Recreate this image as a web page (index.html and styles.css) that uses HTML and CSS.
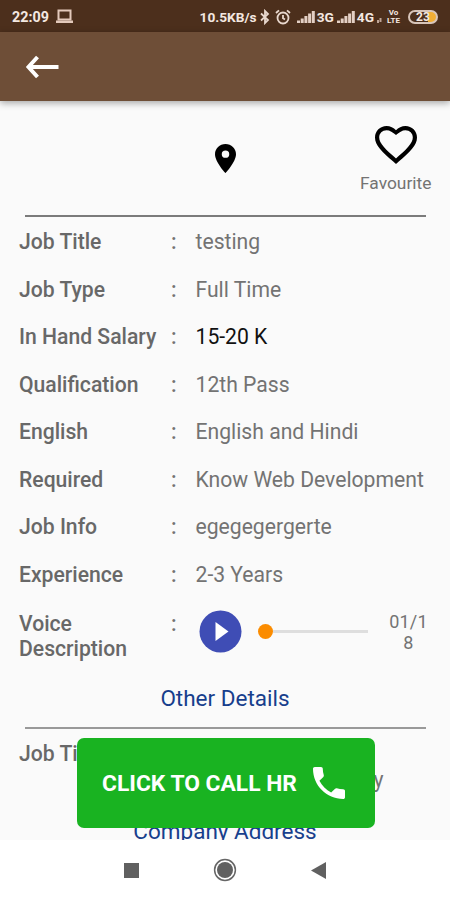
FILE: index.html
```html
<!DOCTYPE html>
<html lang="en">
<head>
    <meta charset="UTF-8">
    <meta name="viewport" content="width=device-width, initial-scale=1.0">
    <title>Job Details</title>
    <link rel="stylesheet" href="styles.css">
</head>
<body>
    <div class="screen">
        <div class="status-bar">
            <span class="clock">22:09</span>
            <svg class="laptop" width="17" height="15" viewBox="0 0 17 15">
                <rect x="2.5" y="1.5" width="12" height="9" fill="none" stroke="#e3c9bb" stroke-width="2"/>
                <rect x="0" y="11.5" width="17" height="2.5" fill="#e3c9bb"/>
            </svg>
            <span class="speed">10.5KB/s</span>
            <svg class="bluetooth" width="10" height="16" viewBox="0 0 10 16">
                <path d="M1 4.5 L8 11 L5 14 V2 L8 5 L1 11.5" fill="none" stroke="#e9d8ce" stroke-width="1.8"/>
            </svg>
            <svg class="alarm" width="16" height="16" viewBox="0 0 16 16" fill="none" stroke="#e9d8ce" stroke-width="1.8">
                <circle cx="8" cy="9" r="5.5"/>
                <path d="M8 6 V9.3 L10 10.5 M1 4 L4 1.3 M15 4 L12 1.3"/>
            </svg>
            <svg class="signal" width="18" height="14" viewBox="0 0 18 14" fill="#e3cfc4">
                <path d="M0 10.500h3v2.500H0zM3.700 8.500h3V13h-3zM7.400 6h3v7h-3zM11.100 3.500h3V13h-3zM14.800 1h3v12h-3z"/>
            </svg>
            <span class="net">3G</span>
            <svg class="signal" width="18" height="14" viewBox="0 0 18 14" fill="#e3cfc4">
                <path d="M0 10.500h3v2.500H0zM3.700 8.500h3V13h-3zM7.400 6h3v7h-3zM11.100 3.500h3V13h-3zM14.800 1h3v12h-3z"/>
            </svg>
            <span class="net">4G</span>
            <svg class="data" width="5" height="6" viewBox="0 0 5 6"><path d="M0 3h2v3H0zM2.500 1h2v4h-2z" fill="#bda496"/></svg>
            <span class="volte"><span>Vo</span><span>LTE</span></span>
            <span class="battery">23</span>
        </div>

        <header class="app-bar">
            <svg width="34" height="24" viewBox="0 0 34 24" fill="none" stroke="#fff" stroke-width="4">
                <path d="M33.500 12 H4 M12.500 2 L3.500 12 L12.500 22"/>
            </svg>
        </header>

        <main class="content">
            <div class="top">
                <svg class="pin" width="21" height="29" viewBox="5 2 14 20" preserveAspectRatio="none">
                    <path d="M12 2C8.130 2 5 5.130 5 9c0 5.250 7 13 7 13s7-7.750 7-13c0-3.870-3.130-7-7-7zm0 9.500a2.500 2.500 0 0 1 0-5 2.500 2.500 0 0 1 0 5z"/>
                </svg>
                <div class="favourite">
                    <svg width="42" height="38" viewBox="2 3 20 18.350" preserveAspectRatio="none">
                        <path d="M16.500 3c-1.740 0-3.410.810-4.500 2.090C10.910 3.810 9.240 3 7.500 3 4.420 3 2 5.420 2 8.500c0 3.780 3.400 6.860 8.550 11.540L12 21.350l1.450-1.320C18.600 15.360 22 12.280 22 8.500 22 5.420 19.580 3 16.500 3zm-4.400 15.550l-.100.100-.100-.100C7.140 14.240 4 11.390 4 8.500 4 6.500 5.500 5 7.500 5c1.540 0 3.040.990 4.500 2.360C13.460 5.990 14.960 5 16.500 5c2 0 3.500 1.500 3.500 3.500 0 2.890-3.140 5.740-7.900 10.050z"/>
                    </svg>
                    <span>Favourite</span>
                </div>
            </div>

            <div class="divider"></div>

            <div class="details">
                <div class="row"><b>Job Title</b><i>:</i><span>testing</span></div>
                <div class="row"><b>Job Type</b><i>:</i><span>Full Time</span></div>
                <div class="row"><b>In Hand Salary</b><i>:</i><span class="salary">15-20 K</span></div>
                <div class="row"><b>Qualification</b><i>:</i><span>12th Pass</span></div>
                <div class="row"><b>English</b><i>:</i><span>English and Hindi</span></div>
                <div class="row"><b>Required</b><i>:</i><span>Know Web Development</span></div>
                <div class="row"><b>Job Info</b><i>:</i><span>egegegergerte</span></div>
                <div class="row"><b>Experience</b><i>:</i><span>2-3 Years</span></div>
            </div>

            <div class="row voice">
                <b>Voice<br>Description</b><i>:</i>
                <div class="player">
                    <svg class="play" width="43" height="43" viewBox="0 0 43 43">
                        <circle cx="21.500" cy="21.500" r="21" fill="#3f4db5"/>
                        <path d="M16.500 12 V31 L29.500 21.500 Z" fill="#fff"/>
                    </svg>
                    <div class="thumb"></div>
                    <div class="track"></div>
                    <div class="time">01/1<br>8</div>
                </div>
            </div>

            <h2 class="section-title">Other Details</h2>
            <div class="divider light"></div>
            <div class="row other"><b>Job Title</b><i>:</i><span class="other-value">y</span></div>
            <h2 class="section-title company">Company Address</h2>
        </main>

        <button class="call-btn">
            <span>CLICK TO CALL HR</span>
            <svg width="32" height="32" viewBox="3 3 18 18" fill="#fff">
                <path d="M6.620 10.790c1.440 2.830 3.760 5.140 6.590 6.590l2.200-2.200c.270-.270.670-.360 1.020-.240 1.120.370 2.330.570 3.570.570.550 0 1 .450 1 1V20c0 .550-.450 1-1 1C10.610 21 3 13.390 3 4c0-.550.450-1 1-1h3.500c.550 0 1 .450 1 1 0 1.250.200 2.450.570 3.570.110.350.030.740-.250 1.020l-2.200 2.200z"/>
            </svg>
        </button>

        <nav class="nav-bar">
            <svg width="15" height="15"><rect width="15" height="15" fill="#606060"/></svg>
            <svg width="24" height="24" viewBox="0 0 24 24">
                <circle cx="12" cy="12" r="10.400" fill="none" stroke="#666" stroke-width="1.500"/>
                <circle cx="12" cy="12" r="8" fill="#606060"/>
            </svg>
            <svg width="15" height="17"><path d="M15 0 V17 L0 8.500 Z" fill="#606060"/></svg>
        </nav>
    </div>
</body>
</html>
```
FILE: styles.css
```css
* { box-sizing: border-box; }
body { margin: 0; font-family: Roboto, sans-serif; background: #fff; }
svg { display: block; flex: none; }
.screen { position: relative; display: flex; flex-direction: column; width: 450px; height: 900px; overflow: hidden; }

.status-bar { display: flex; align-items: center; flex: none; height: 32px; padding: 1px 12px 0; background: #4c2f1c; color: #f4e8e1; font-size: 13px; font-weight: 700; white-space: nowrap; }
.clock { width: 37px; font-size: 14.3px; }
.laptop { margin-left: 7px; }
.speed { margin-left: auto; font-size: 13.7px; }
.bluetooth { margin-left: 3px; }
.alarm { margin: 0 6px 0 5px; }
.signal { margin-right: 2px; }
.net { margin-right: 3px; font-size: 13.7px; }
.data { margin: 6px 4px 0 0; }
.volte { display: flex; flex-direction: column; width: 15px; font-size: 8px; line-height: 8px; text-align: center; }
.battery { width: 30px; height: 14px; margin-left: 7px; border: 2px solid #d8c5ba; border-radius: 7px; background: linear-gradient(to right, #4c2f1c 68%, #f0ad35 68%); font-size: 12px; line-height: 10px; text-align: center; }

.app-bar { display: flex; align-items: center; flex: none; height: 69px; padding: 0 0 0 25px; background: #6e4e37; box-shadow: 0 2px 7px rgba(0,0,0,0.35); z-index: 1; }

.content { height: 739px; overflow: hidden; background: #fafafa; color: #737373; font-size: 21.15px; }
.top { display: grid; grid-template-columns: 1fr 21px 1fr; height: 114px; padding-top: 25px; }
.pin { grid-column: 2; margin-top: 18px; }
.favourite { display: flex; flex-direction: column; align-items: center; gap: 9px; padding-left: 106px; font-size: 17.4px; line-height: 20px; }
.divider { height: 2px; margin: 0 24px 0 25px; background: #7b7b7b; }
.divider.light { background: #999; }

.details { padding: 1px 0; }
.row { display: grid; grid-template-columns: 152px 24.5px 1fr; height: 47.5px; padding-left: 19px; line-height: 25px; align-items: center; }
.row b { color: #686868; font-weight: 500; }
.row i { font-style: normal; font-weight: 500; }
.row .salary { color: #111; }

.voice { height: 80px; padding-top: 12px; align-items: start; }
.player { display: flex; align-items: center; height: 43px; padding-left: 3px; margin-top: -1px; }
.thumb { width: 15px; height: 15px; margin-left: 16px; border-radius: 50%; background: #fb8c00; }
.track { width: 95px; height: 3px; background: #dedede; }
.time { width: 44px; margin-left: 19px; font-size: 18px; line-height: 21px; text-align: center; letter-spacing: 0.2px; }

.section-title { margin: 0; height: 48px; padding-top: 6px; color: #173e8c; font-size: 22.5px; font-weight: 400; line-height: 27px; text-align: center; }
.other { height: 89px; padding-top: 12px; align-items: start; }
.other-value { padding: 26px 0 0 178px; }
.company { padding-top: 0; }

.call-btn { position: absolute; left: 77px; top: 738px; z-index: 2; display: flex; align-items: center; justify-content: space-between; width: 298px; height: 90px; padding: 0 30px 0 25px; border: 0; border-radius: 7px; background: #19b321; color: #fff; font-family: inherit; font-size: 22.8px; font-weight: 700; white-space: nowrap; }

.nav-bar { display: flex; align-items: center; flex: 1; gap: 74px; padding-left: 124px; background: #fff; }
```
